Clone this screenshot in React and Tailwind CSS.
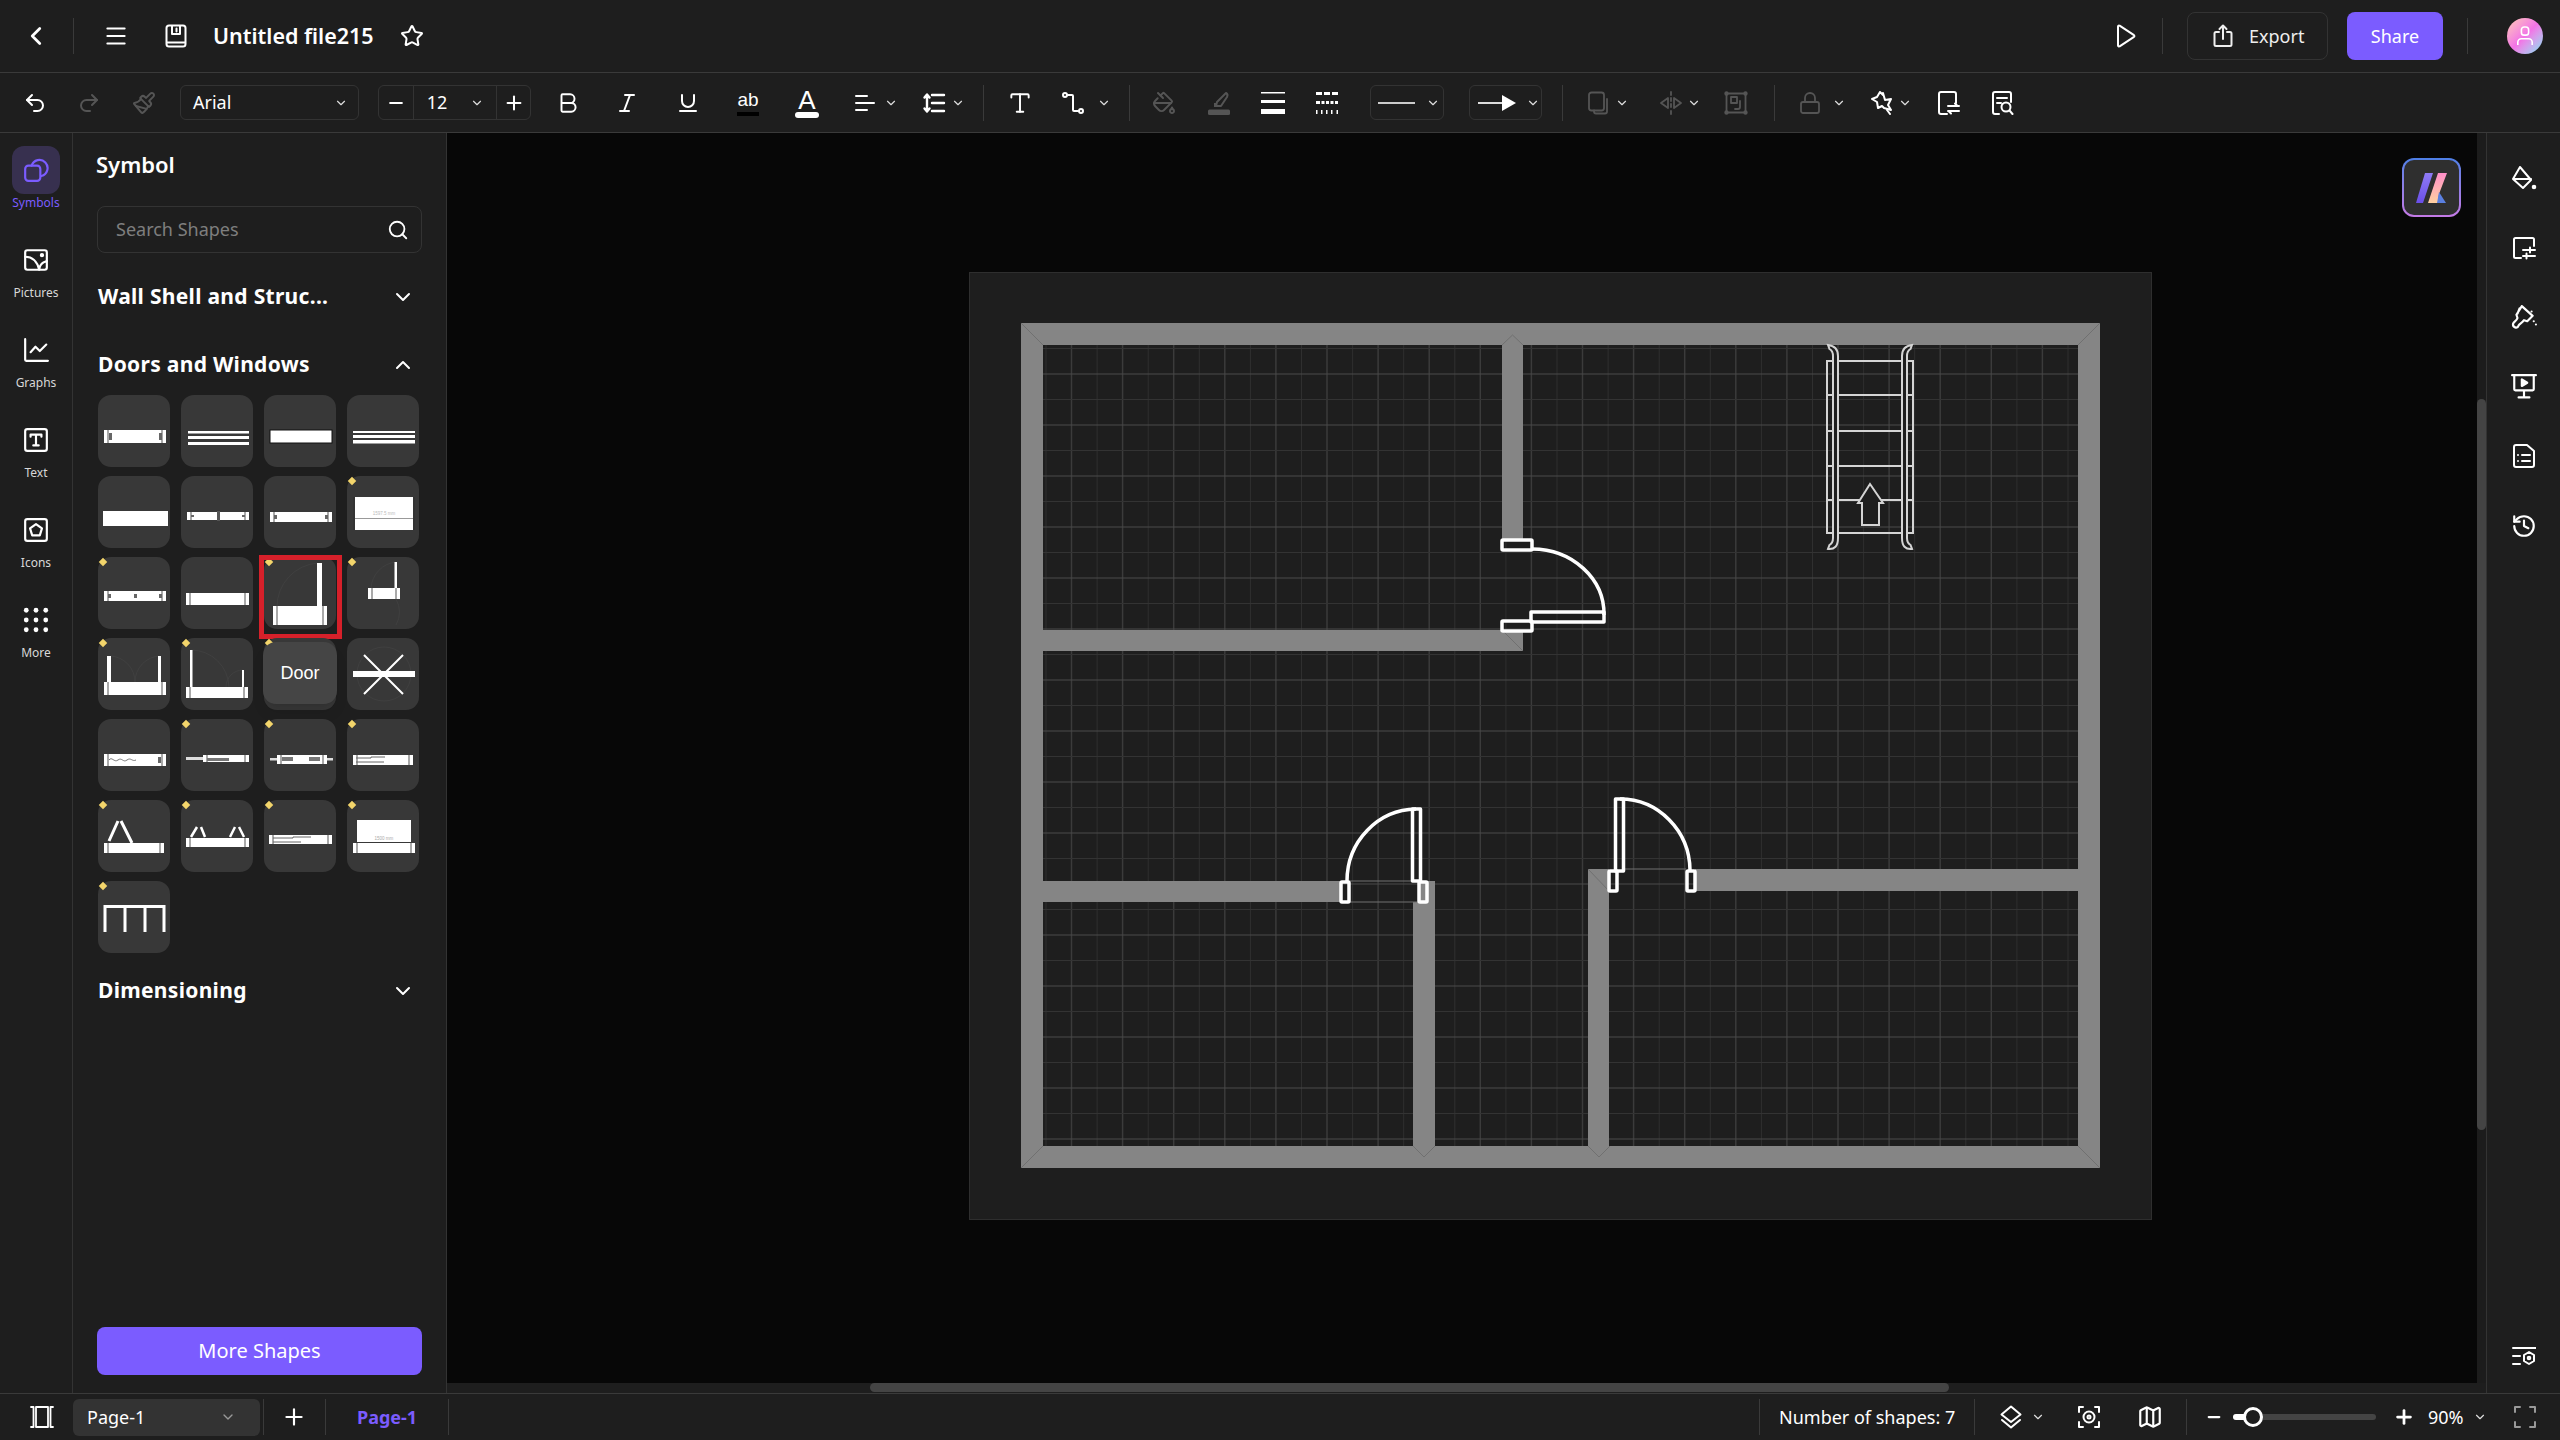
import React from 'react';
import {
  ChevronLeft, ChevronDown, ChevronUp, Menu, Star, Undo2, Redo2, Paintbrush, Bold, Italic, Underline,
  Type, PaintBucket, Lock, Plus, Minus, Search, Map, History,
} from 'lucide-react';

const Ic = ({ children, className = '', sw = 2, size = 24 }) => (
  <svg viewBox="0 0 24 24" width={size} height={size} fill="none" stroke="currentColor" strokeWidth={sw} strokeLinecap="round" strokeLinejoin="round" className={`shrink-0 ${className}`}>
    {children}
  </svg>
);

const Chev = ({ className = '' }) => <ChevronDown size={14} strokeWidth={2} className={`shrink-0 text-[#ddd] ${className}`} />;
const Divider = ({ className = '' }) => <div className={`w-px h-[36px] shrink-0 bg-[#3a3a3a] ${className}`} />;

// toolbar + rail icons
const SaveIcon = ({ className }) => (
  <Ic className={className}><rect x="2.5" y="1.5" width="19" height="21" rx="2.5" /><path d="M8 2v8h8V2M12.5 4.5v3M3 18.5h18" /></Ic>
);
const AlignIcon = ({ className }) => <Ic className={className}><path d="M3 5h11M3 12h18M3 19h11" /></Ic>;
const SpacingIcon = ({ className }) => (
  <Ic className={className} sw={2.4}><path d="M10 4h12M10 12h12M10 20h12" /><path d="M5 4v16M2.5 6.5 5 3.5l2.5 3M2.5 17.5l2.5 3 2.5-3" /></Ic>
);
const ConnectorIcon = ({ className }) => (
  <Ic className={className}><circle cx="4" cy="4" r="2" /><circle cx="20" cy="20" r="2" /><path d="M6 4h5a1 1 0 0 1 1 1v14a1 1 0 0 0 1 1h5" /></Ic>
);
const PenBarIcon = ({ className }) => (
  <svg viewBox="0 0 24 24" width="24" height="24" fill="none" className={`shrink-0 ${className}`}>
    <path d="M19 2c2 1 2 2 1 4l-6 9H9l1-4Z" stroke="currentColor" strokeWidth="2" strokeLinejoin="round" />
    <path d="M8 12v4" stroke="currentColor" strokeWidth="2" />
    <rect x="1" y="18.5" width="22" height="5.5" rx="1.5" fill="currentColor" />
  </svg>
);
const WeightIcon = ({ className }) => (
  <svg viewBox="0 0 24 24" width="24" height="24" className={`shrink-0 ${className}`} fill="currentColor">
    <rect y="1" width="24" height="1.5" /><rect y="9" width="24" height="3" /><rect y="18" width="24" height="5" />
  </svg>
);
const DashIcon = ({ className }) => (
  <svg viewBox="0 0 24 24" width="24" height="24" className={`shrink-0 ${className}`} fill="currentColor">
    <path d="M1 1h6v3H1zM9 1h6v3H9zM17 1h6v3h-6z" />
    <path d="M1 10h4v3H1zM6.500 10h3v3h-3zM11 10h3v3h-3zM15.500 10h3v3h-3zM20 10h3v3h-3z" />
    <path d="M1 19h1.500v4H1zM6 19h1.500v4H6zM11 19h1.500v4H11zM16 19h1.500v4H16zM21.500 19H23v4h-1.500z" />
  </svg>
);
const CopyIcon = ({ className }) => <Ic className={className} sw={1.8}><rect x="2" y="1.500" width="15" height="18" rx="2.500" /><path d="M7 19.500v1a2 2 0 0 0 2 2h9a2 2 0 0 0 2-2V8" /></Ic>;
const FlipIcon = ({ className }) => <Ic className={className} sw={1.8}><path d="M12 1v3M12 7v3M12 13v3M12 20v3M9 7v10l-7-5ZM15 7v10l7-5Z" /></Ic>;
const GroupIcon = ({ className }) => (
  <Ic className={className} sw={1.8}><rect x="2.500" y="2.500" width="19" height="19" /><circle cx="2.500" cy="2.500" r="1.300" /><circle cx="21.500" cy="2.500" r="1.300" /><circle cx="2.500" cy="21.500" r="1.300" /><circle cx="21.500" cy="21.500" r="1.300" /><rect x="7" y="6" width="6" height="6" /><path d="M16 10v6a2 2 0 0 1-2 2h-3" /></Ic>
);
const MagicIcon = ({ className }) => (
  <Ic className={className}><path d="M13 2 15 9l6-1-3 6 3 5-7-2-2-2-4 2-1-6-5-3 5-2 3-5 3 3" /><path d="m17 19 3 4" /></Ic>
);
const ReplaceIcon = ({ className }) => (
  <Ic className={className}><path d="M11 23H5a2 2 0 0 1-2-2V3a2 2 0 0 1 2-2h13a2 2 0 0 1 2 2v9" /><path d="M12 15h11M19 12.500l2.500 2.500M23 20H12M15 22.500 12.500 20" /></Ic>
);
const DocSearchIcon = ({ className }) => (
  <Ic className={className}><path d="M9 23H5a2 2 0 0 1-2-2V3a2 2 0 0 1 2-2h14a2 2 0 0 1 2 2v8" /><path d="M7 7h10M7 12h4" /><circle cx="16" cy="16" r="4.500" /><path d="m19.500 19.500 3 3.500" /></Ic>
);
const PlayIcon = ({ className }) => <Ic className={className}><path d="M5 2.500v19a1 1 0 0 0 1.600.8L21 12.800a1 1 0 0 0 0-1.600L6.600 1.700A1 1 0 0 0 5 2.500Z" /></Ic>;
const ExportIcon = ({ className }) => <Ic className={className}><path d="M8 8H5a1.500 1.500 0 0 0-1.500 1.500v11A1.500 1.500 0 0 0 5 22h14a1.500 1.500 0 0 0 1.500-1.500v-11A1.500 1.500 0 0 0 19 8h-3M12 15V2M8.500 5 12 1.500 15.500 5" /></Ic>;

const SymbolsIcon = ({ className }) => (
  <Ic className={className} size={26}><rect x="2" y="8" width="14" height="14" rx="3" /><path d="M8 8a7.500 7.500 0 1 1 9 9.500" /></Ic>
);
const PicturesIcon = ({ className }) => (
  <Ic className={className} size={26}><rect x="2" y="3" width="20" height="18" rx="2" /><path d="M2 9c6 0 11 4 13 12M15 21c0-4 3-7 7-8" /><circle cx="17.500" cy="7.500" r="1" fill="currentColor" /></Ic>
);
const GraphsIcon = ({ className }) => <Ic className={className} size={26}><path d="M2 2v19a1 1 0 0 0 1 1h20M7 14l4.500-5 4 4 6-6" /></Ic>;
const TextBoxIcon = ({ className }) => (
  <Ic className={className} size={26}><rect x="2" y="2" width="20" height="20" rx="2" /><path d="M7 9V7h10v2M12 7v10M9.500 17h5" /></Ic>
);
const IconsBoxIcon = ({ className }) => (
  <Ic className={className} size={26}><rect x="2" y="2" width="20" height="20" rx="2" /><path d="m12 6.500 5.500 4-2 6.500h-7l-2-6.500Z" /></Ic>
);
const DotsIcon = ({ className }) => (
  <svg viewBox="0 0 24 24" width="26" height="26" fill="currentColor" className={`shrink-0 ${className}`}>
    {[3, 12, 21].map((y) => [3, 12, 21].map((x) => <circle key={`${x}-${y}`} cx={x} cy={y} r="2.200" />))}
  </svg>
);

// right rail
const FillIcon = ({ className }) => (
  <svg viewBox="0 0 26 26" width="26" height="26" fill="none" stroke="currentColor" strokeWidth="2" strokeLinejoin="round" strokeLinecap="round" className={`shrink-0 ${className}`}>
    <path d="M9 1l11 13-8 8-10-9Z" />
    <path d="M3 13h17" />
    <circle cx="23" cy="21" r="1.300" fill="currentColor" />
  </svg>
);
const MonitorSliderIcon = ({ className }) => (
  <Ic className={className}><path d="M9 22H3.500A1.500 1.500 0 0 1 2 20.500v-17A1.500 1.500 0 0 1 3.500 2h17A1.500 1.500 0 0 1 22 3.500V10" /><path d="M11 14h12M11 20h12M18 11.500v5M14.500 17.500v5" /></Ic>
);
const BrushSparkIcon = ({ className }) => (
  <Ic className={className} size={26}><path d="m10 1 10 9-5 5-3-1c-2 3-4 3-5 5-1 3-6 2-5-2 1-2 3-2 4-5l-1-3ZM8 3 6 8" /><path d="M21 15v.01M23 18v.01M19 6v.01" /></Ic>
);
const PresentIcon = ({ className }) => (
  <Ic className={className} size={26}><path d="M1 2h22M3 2v13a1 1 0 0 0 1 1h16a1 1 0 0 0 1-1V2M12 16v6M7 22.500h10" /><path d="M10 6v6l5-3Z" fill="currentColor" /></Ic>
);
const DocListIcon = ({ className }) => (
  <Ic className={className}><path d="M15 1H4a2 2 0 0 0-2 2v18a2 2 0 0 0 2 2h16a2 2 0 0 0 2-2V7Z" /><path d="M10 11h8M10 17h8M6 11v.01M6 17v.01" /></Ic>
);
const SettingsListIcon = ({ className }) => (
  <Ic className={className}><path d="M1 2h23M1 10h7M1 18h7" /><path d="m17 6 5 3v6l-5 3-5-3V9Z" /><circle cx="17" cy="12" r="1.300" /></Ic>
);

// bottom bar
const PanelIcon = ({ className }) => (
  <Ic className={className} sw={1.8}><rect x="6" y="2" width="12" height="20" /><path d="M1 2h2.500v20H1M23 2h-2.500v20H23" /></Ic>
);
const LayersIcon = ({ className }) => <Ic className={className}><path d="m12 1.500 9.500 8L12 17 2.500 9.500Z" /><path d="m3 15 9 7.500 9-7.500" /></Ic>;
const FocusIcon = ({ className }) => (
  <Ic className={className}><path d="M6 2H2v5M18 2h4v5M6 22H2v-5M18 22h4v-5" /><circle cx="12" cy="12" r="5.500" /><circle cx="12" cy="12" r="1.500" /></Ic>
);
const FullIcon = ({ className }) => <Ic className={className}><path d="M7 2H2v5M17 2h5v5M7 22H2v-5M17 22h5v-5" /></Ic>;

const AiLogo = () => (
  <svg viewBox="0 0 36 36" width="36" height="36">
    <defs>
      <linearGradient id="aiA" x1="0" y1="0" x2="0" y2="1"><stop offset="0" stopColor="#8f7bf5" /><stop offset="1" stopColor="#6a4fe8" /></linearGradient>
      <linearGradient id="aiB" x1="0" y1="0" x2="0" y2="1"><stop offset="0" stopColor="#ff8ec8" /><stop offset="1" stopColor="#ffd0a0" /></linearGradient>
    </defs>
    <path d="M11 3h8L9 33H2Z" fill="url(#aiA)" />
    <path d="M24 3h9l-8 21-1 9h-10Z" fill="url(#aiB)" />
    <path d="m25 22 7 11h-9Z" fill="#5a7fe0" />
  </svg>
);

// symbol tile drawings, 72x72 units
const W = 'white';
const Caps = ({ x1, x2, y1, y2 }) => (
  <>
    <rect x={x1} y={y1} width={x2 - x1} height={y2 - y1} fill={W} />
    <rect x={x1 + 3.500} y={y1} width="1" height={y2 - y1} fill="#555" />
    <rect x={x2 - 4.500} y={y1} width="1" height={y2 - y1} fill="#555" />
  </>
);
const Win = ({ y1, y2, marks = [] }) => (
  <>
    <Caps x1={6} x2={68} y1={y1} y2={y2} />
    {marks.map((m) => <rect key={m} x={m} y={y1 + 3} width="3" height={y2 - y1 - 6} fill="#666" />)}
  </>
);
const Arc = ({ d }) => <path d={d} fill="none" stroke="#444" strokeWidth="0.600" />;

const tiles = [
  { art: <Win y1={35} y2={48} marks={[11, 61]} /> },
  { art: <><rect x="7" y="36" width="61" height="2.500" fill={W} /><rect x="7" y="41" width="61" height="3" fill={W} /><rect x="7" y="47" width="61" height="3" fill={W} /></> },
  { art: <rect x="6" y="35" width="62" height="13" fill={W} stroke="#111" strokeWidth="1" /> },
  { art: <><rect x="6" y="36" width="62" height="2" fill={W} /><rect x="6" y="40" width="62" height="3" fill={W} /><rect x="6" y="45" width="62" height="3.500" fill={W} /></> },
  { art: <rect x="5" y="35" width="65" height="15" fill={W} /> },
  { art: <><Win y1={36} y2={44} marks={[10, 61]} /><rect x="36" y="35" width="3" height="10" fill="#555" /></> },
  { art: <Win y1={36} y2={46} marks={[10, 61]} /> },
  { premium: true, art: <><rect x="6" y="21" width="62" height="33" fill={W} /><rect x="6" y="21" width="2" height="33" fill="#333" /><rect x="66" y="21" width="2" height="33" fill="#333" /><rect x="8" y="42" width="58" height="1" fill="#999" /><text x="37" y="39" fontSize="4.500" fill="#bbb" textAnchor="middle" fontFamily="Liberation Sans">1597.5 mm</text></> },
  { premium: true, art: <><Win y1={34} y2={44} marks={[10, 36, 61]} /></> },
  { art: <Caps x1={5} x2={68} y1={36} y2={48} /> },
  { premium: true, door: true, art: <><Arc d="M54 6A44 44 0 0 0 13 50" /><rect x="53" y="6" width="5" height="43" fill={W} /><Caps x1={9} x2={63} y1={49} y2={68} /></> },
  { premium: true, art: <><Arc d="M49 5A28 28 0 0 0 24 31M49 42A26 26 0 0 1 49 68" /><rect x="47.500" y="5" width="2.500" height="26" fill={W} /><Caps x1={21} x2={53} y1={31} y2={42} /></> },
  { premium: true, art: <><Arc d="M12 18A26 26 0 0 1 37 44M62 18A26 26 0 0 0 37 44" /><rect x="9" y="18" width="4" height="26" fill={W} /><rect x="60" y="18" width="3" height="26" fill={W} /><Caps x1={6} x2={68} y1={44} y2={57} /></> },
  { premium: true, art: <><Arc d="M10 12A38 38 0 0 1 48 49M62 32A17 17 0 0 0 45 49" /><rect x="9" y="12" width="2.500" height="37" fill={W} /><rect x="61" y="32" width="2" height="17" fill={W} /><Caps x1={5} x2={67} y1={49} y2={60} /></> },
  { premium: true, tip: 'Door', art: null },
  { art: <><circle cx="37" cy="36" r="27" fill="none" stroke="#444" strokeWidth="0.600" /><rect x="6" y="33" width="62" height="6" fill={W} /><path d="M17 17 56 56M56 17 17 56" stroke={W} strokeWidth="2" /></> },
  { art: <><Win y1={35} y2={47} marks={[60]} /><path d="M11 41c3-4 5 3 9 0s5 3 9 0 5 2 9 0" stroke="#777" strokeWidth="1" fill="none" /></> },
  { premium: true, art: <><rect x="5" y="38" width="17" height="3" fill="#ddd" /><Caps x1={22} x2={68} y1={36} y2={43} /><rect x="26" y="39" width="22" height="3" fill="#777" /></> },
  { premium: true, art: <><rect x="6" y="39" width="63" height="2.500" fill="#ddd" /><Caps x1={13} x2={63} y1={36} y2={45} /><rect x="18" y="38" width="11" height="4" fill="#777" /><rect x="45" y="38" width="11" height="4" fill="#777" /></> },
  { premium: true, art: <><Caps x1={6} x2={66} y1={36} y2={46} /><path d="M9 39h15v-1h14M9 43h28" stroke="#666" strokeWidth="1" fill="none" /></> },
  { premium: true, art: <><path d="M11 41 20 21M23 21 34 43" stroke={W} strokeWidth="3" /><Caps x1={6} x2={66} y1={43} y2={53} /></> },
  { premium: true, art: <><path d="M10 37 16 27M20 27 24 37M49 37 54 27M58 27 63 37" stroke={W} strokeWidth="2.500" /><Caps x1={5} x2={68} y1={38} y2={47} /></> },
  { premium: true, art: <><Caps x1={5} x2={68} y1={35} y2={44} /><path d="M9 38h20v-1h18M9 42h28" stroke="#666" strokeWidth="1" fill="none" /></> },
  { premium: true, art: <><rect x="10" y="20" width="54" height="22" fill={W} /><text x="37" y="40" fontSize="4.500" fill="#aaa" textAnchor="middle" fontFamily="Liberation Sans">1500 mm</text><Caps x1={6} x2={68} y1={43} y2={53} /></> },
  { premium: true, art: <path d="M7 51V25.500H66V51M27 25.500V51M47 25.500V51" fill="none" stroke={W} strokeWidth="3" /> },
];

const Tile = ({ tile }) => (
  <div className="relative w-[72px] h-[72px] rounded-[13px] bg-[#383838]">
    <svg viewBox="0 0 72 72" width="72" height="72" className="block">{tile.art}</svg>
    {tile.premium && <div className="absolute left-[2px] top-[2px] w-[6px] h-[6px] rotate-45 bg-[#f3d56b]" />}
    {tile.door && <div className="absolute left-[-5px] right-[-6px] top-[-2px] bottom-[-10px] border-[5px] border-[#d6202a]" />}
    {tile.tip && (
      <div className="absolute left-[-1px] top-[4px] w-[74px] h-[62px] rounded-[13px] bg-[#454545] shadow-lg flex items-center justify-center text-[18px] text-white font-['Liberation_Sans',sans-serif]">
        {tile.tip}
      </div>
    )}
  </div>
);

const RailItem = ({ icon: Icon, label, active }) => (
  <div className="h-[90px] w-full flex flex-col items-center">
    <div className={`w-[48px] h-[48px] rounded-xl flex items-center justify-center ${active ? 'bg-[#37304f] text-[#7b5cff]' : 'text-white'}`}>
      <Icon />
    </div>
    <div className={`mt-[1px] h-[16px] text-[12px] leading-[16px] ${active ? 'text-[#7b5cff]' : 'text-[#d8d8d8]'}`}>{label}</div>
  </div>
);

const SectionTitle = ({ children, open, className = '' }) => (
  <div className={`w-[317px] h-[30px] flex items-center justify-between ${className}`}>
    <span className="text-[21px] font-bold tracking-[0.3px] whitespace-nowrap">{children}</span>
    {open ? <ChevronUp size={24} strokeWidth={2} /> : <ChevronDown size={24} strokeWidth={2} />}
  </div>
);

// floor plan, coordinates are page pixels so the numbers line up with the picture
const range = (from, to, step) => {
  const out = [];
  for (let v = from; v <= to; v += step) out.push(v);
  return out;
};
const WALL = '#858585';

const DoorStroke = ({ children }) => (
  <g fill="none" stroke="white" strokeWidth="3.500" strokeLinejoin="round">{children}</g>
);

const FloorPlan = () => (
  <svg viewBox="969 272 1183 948" width="1183" height="948" className="block">
    <rect x="969.500" y="272.500" width="1182" height="947" fill="#1e1e1e" stroke="#2e2e2e" />
    {/* grid */}
    <g>
      {range(1046, 2078, 51.1).map((x) => <line key={`v${x}`} x1={x} x2={x} y1="345" y2="1146" stroke="#2f2f2f" strokeWidth="1" />)}
      {range(1071.500, 2078, 51.1).map((x) => <line key={`V${x}`} x1={x} x2={x} y1="345" y2="1146" stroke="#3b3b3b" strokeWidth="1.500" />)}
      {range(348.500, 1146, 51).map((y) => <line key={`h${y}`} x1="1043" x2="2078" y1={y} y2={y} stroke="#333" strokeWidth="1" />)}
      {range(374, 1146, 51).map((y) => <line key={`H${y}`} x1="1043" x2="2078" y1={y} y2={y} stroke="#4a4a4a" strokeWidth="1" />)}
    </g>
    {/* walls */}
    <g fill={WALL}>
      <rect x="1021" y="323" width="1079" height="22" />
      <rect x="1021" y="1146" width="1079" height="22" />
      <rect x="1021" y="323" width="22" height="845" />
      <rect x="2078" y="323" width="22" height="845" />
      <rect x="1502" y="345" width="21" height="194" />
      <rect x="1043" y="630" width="480" height="21" />
      <rect x="1043" y="881" width="297" height="21" />
      <rect x="1420" y="881" width="15" height="21" />
      <rect x="1413" y="902" width="22" height="244" />
      <rect x="1588" y="869" width="21" height="277" />
      <rect x="1695" y="869" width="383" height="22" />
    </g>
    <g stroke="#707070" strokeWidth="1" fill="none">
      <path d="M1021 323l22 22M2100 323l-22 22M1021 1168l22-22M2100 1168l-22-22M1502 345l10.500-10 10.500 10M1502 630l21 21M1588 869l21 22M1413 1146l11 11 11-11M1588 1146l11 11 11-11" />
      <path d="M1349 881h69M1349 902h69M1624 869h62" />
    </g>
    {/* door, right of the top room */}
    <DoorStroke>
      <rect x="1502" y="540" width="30" height="10" rx="1" />
      <rect x="1502" y="621" width="30" height="10" rx="1" />
      <rect x="1531" y="612" width="73" height="10" />
      <path d="M1532 549A72 65 0 0 1 1604 615" />
    </DoorStroke>
    {/* door, bottom left room */}
    <DoorStroke>
      <rect x="1341" y="882" width="8" height="20" rx="1" />
      <rect x="1419" y="882" width="8" height="20" rx="1" />
      <rect x="1412.500" y="809" width="8" height="72" />
      <path d="M1347 881A70 72 0 0 1 1416 809" />
    </DoorStroke>
    {/* door, bottom right room */}
    <DoorStroke>
      <rect x="1609" y="871" width="8" height="20" rx="1" />
      <rect x="1687" y="871" width="8" height="20" rx="1" />
      <rect x="1615.500" y="799" width="8" height="72" />
      <path d="M1620 799A70 72 0 0 1 1690 870" />
    </DoorStroke>
    {/* stairs */}
    <g fill="none" stroke="#d4d4d4" strokeWidth="2">
      <rect x="1827" y="361" width="86" height="172" />
      <path d="M1827 395h86M1827 431h86M1827 466h86M1827 500h86" />
      <path d="M1828 345l1.500 4Q1833 351 1833 356V538Q1833 543 1829.500 545L1828 549Q1838 550 1838 538V356Q1838 346 1828 345Z" fill="#1e1e1e" />
      <path d="M1912 345l-1.500 4Q1907 351 1907 356V538Q1907 543 1910.500 545L1912 549Q1902 550 1902 538V356Q1902 346 1912 345Z" fill="#1e1e1e" />
      <path d="M1870 484 1858 503h4v22h17v-22h4Z" fill="#1e1e1e" />
    </g>
  </svg>
);

const TopBar = () => (
  <header className="h-[73px] shrink-0 flex items-center pl-[24px] border-b border-[#3a3a3a]">
    <ChevronLeft size={30} strokeWidth={2.200} className="-ml-[3px] shrink-0" />
    <Divider className="ml-[22px]" />
    <Menu size={26} strokeWidth={1.800} className="ml-[29px] shrink-0" />
    <SaveIcon className="ml-[35px]" />
    <div className="ml-[25px] w-[162px] text-[21.5px] font-semibold whitespace-nowrap">Untitled file215</div>
    <Star size={24} strokeWidth={2} className="ml-[25px] shrink-0" />
    <PlayIcon className="ml-auto" />
    <Divider className="ml-[25px]" />
    <button className="ml-[24px] w-[141px] h-[48px] rounded-lg border border-[#333] flex items-center pl-[23px] gap-[14px] text-[18px] text-[#eee]">
      <ExportIcon />
      <span>Export</span>
    </button>
    <button className="ml-[19px] w-[96px] h-[48px] rounded-lg bg-[#7b5cff] text-[18px] text-white">Share</button>
    <Divider className="ml-[24px]" />
    <div className="ml-[39px] mr-[17px] w-[36px] h-[36px] rounded-full shrink-0 bg-linear-to-br from-[#ffc9b0] via-[#f272e6] to-[#5ce3f5] flex items-center justify-center">
      <svg viewBox="0 0 20 24" width="18" height="22" fill="none" stroke="white" strokeWidth="1.800"><rect x="6" y="2" width="8" height="9" rx="3" /><path d="M2 22v-3a4 4 0 0 1 4-4h8a4 4 0 0 1 4 4v3" /></svg>
    </div>
  </header>
);

const ToolBar = () => (
  <div className="h-[60px] shrink-0 flex items-center pl-[23px] border-b border-[#3a3a3a] text-white">
    <Undo2 size={24} strokeWidth={2} className="shrink-0" />
    <Redo2 size={24} strokeWidth={2} className="ml-[30px] shrink-0 text-[#555]" />
    <Paintbrush size={24} strokeWidth={2} className="ml-[31px] shrink-0 text-[#555]" />
    <div className="ml-[24px] w-[179px] h-[35px] shrink-0 rounded-md border border-[#333] flex items-center justify-between pl-[12px] pr-[10px] text-[18px] font-['Noto_Sans',sans-serif]">
      <span>Arial</span>
      <Chev />
    </div>
    <div className="ml-[19px] w-[153px] h-[35px] shrink-0 flex items-center rounded-md border border-[#333]">
      <div className="w-[34px] flex justify-center"><Minus size={20} strokeWidth={2.500} /></div>
      <div className="w-[85px] h-[35px] border border-[#333] flex items-center justify-between pl-[13px] pr-[12px] text-[18px]">
        <span>12</span>
        <Chev />
      </div>
      <div className="w-[33px] flex justify-center"><Plus size={22} strokeWidth={2.200} /></div>
    </div>
    <Bold size={26} strokeWidth={1.800} className="ml-[24px] shrink-0" />
    <Italic size={24} strokeWidth={2} className="ml-[34px] shrink-0" />
    <Underline size={24} strokeWidth={2} className="ml-[37px] shrink-0" />
    <div className="ml-[36px] w-[24px] shrink-0 flex flex-col items-center text-[19px] leading-[20px] font-['Liberation_Sans',sans-serif]">
      <span>ab</span>
      <div className="w-[22px] h-[4px] bg-black mt-[2px]" />
    </div>
    <div className="ml-[35px] w-[24px] shrink-0 flex flex-col items-center text-[26px] leading-[24px] font-['Liberation_Sans',sans-serif]">
      <span>A</span>
      <div className="w-[24px] h-[6px] rounded-[3px] bg-white" />
    </div>
    <AlignIcon className="ml-[34px]" />
    <Chev className="ml-[7px]" />
    <SpacingIcon className="ml-[24px]" />
    <Chev className="ml-[5px]" />
    <Divider className="ml-[18px]" />
    <Type size={26} strokeWidth={1.800} className="ml-[23px] shrink-0" />
    <ConnectorIcon className="ml-[28px]" />
    <Chev className="ml-[12px]" />
    <Divider className="ml-[18px]" />
    <PaintBucket size={24} strokeWidth={2} className="ml-[22px] shrink-0 text-[#555]" />
    <PenBarIcon className="ml-[31px] text-[#555]" />
    <WeightIcon className="ml-[30px]" />
    <DashIcon className="ml-[30px]" />
    <div className="ml-[31px] w-[74px] h-[35px] shrink-0 rounded-md border border-[#333] flex items-center pl-[7px] gap-[11px]">
      <div className="w-[37px] h-[2px] bg-[#ccc]" />
      <Chev />
    </div>
    <div className="ml-[25px] w-[73px] h-[35px] shrink-0 rounded-md border border-[#333] flex items-center pl-[8px] gap-[10px]">
      <svg viewBox="0 0 38 16" width="38" height="16"><rect y="7" width="26" height="2" fill="#ddd" /><path d="M24 0 38 8 24 16Z" fill="white" /></svg>
      <Chev />
    </div>
    <Divider className="ml-[20px]" />
    <CopyIcon className="ml-[24px] text-[#555]" />
    <Chev className="ml-[4px] text-[#555]" />
    <FlipIcon className="ml-[30px] text-[#555]" />
    <Chev className="ml-[4px] text-[#555]" />
    <GroupIcon className="ml-[23px] text-[#555]" />
    <Divider className="ml-[26px]" />
    <Lock size={24} strokeWidth={1.800} className="ml-[23px] shrink-0 text-[#555]" />
    <Chev className="ml-[10px] text-[#555]" />
    <MagicIcon className="ml-[24px]" />
    <Chev className="ml-[4px]" />
    <ReplaceIcon className="ml-[24px]" />
    <DocSearchIcon className="ml-[30px]" />
  </div>
);

const SymbolPanel = () => (
  <aside className="w-[374px] shrink-0 flex flex-col pl-[25px] border-r border-[#333]">
    <div className="mt-[16px] h-[30px] -ml-[2px] flex items-center text-[22px] font-semibold">Symbol</div>
    <div className="mt-[27px] -ml-[1px] w-[325px] h-[47px] rounded-lg border border-[#333] flex items-center justify-between pl-[18px] pr-[12px]">
      <span className="text-[18px] text-[#7e7e7e]">Search Shapes</span>
      <Search size={22} strokeWidth={2} />
    </div>
    <SectionTitle className="mt-[29px]">Wall Shell and Struc...</SectionTitle>
    <SectionTitle open className="mt-[38px]">Doors and Windows</SectionTitle>
    <div className="mt-[15px] grid grid-cols-[repeat(4,72px)] gap-x-[11px] gap-y-[9px]">
      {tiles.map((tile, i) => <Tile key={i} tile={tile} />)}
    </div>
    <SectionTitle className="mt-[23px]">Dimensioning</SectionTitle>
    <button className="mt-auto mb-[18px] -ml-[1px] w-[325px] h-[48px] shrink-0 rounded-lg bg-[#7b5cff] text-[20px] text-white">More Shapes</button>
  </aside>
);

const Canvas = () => (
  <div className="flex-1 min-w-0 flex flex-col">
    <div className="flex-1 min-h-0 flex">
      <div className="relative w-[2030px] shrink-0 bg-[#070707] pl-[522px] pt-[139px]">
        <div className="w-[1183px] h-[948px]">
          <FloorPlan />
        </div>
        <div className="absolute left-[1955px] top-[25px] w-[59px] h-[59px] rounded-[12px] p-[2px] bg-linear-to-b from-[#4d7fe6] to-[#c47ae6]">
          <div className="w-full h-full rounded-[10px] bg-[#2f2f2f] flex items-center justify-center"><AiLogo /></div>
        </div>
      </div>
      <div className="flex-1 flex flex-col bg-[#1c1c1c]">
        <div className="h-[266px] shrink-0" />
        <div className="h-[731px] rounded-full bg-[#444]" />
      </div>
    </div>
    <div className="h-[10px] shrink-0 flex bg-[#1e1e1e]">
      <div className="w-[423px] shrink-0" />
      <div className="w-[1079px] h-[9px] rounded-full bg-[#444]" />
    </div>
  </div>
);

const RightRail = () => (
  <aside className="w-[74px] shrink-0 flex flex-col items-center border-l border-[#333] pt-[33px] text-white">
    <FillIcon />
    <MonitorSliderIcon className="mt-[44px]" />
    <BrushSparkIcon className="mt-[45px]" />
    <PresentIcon className="mt-[42px]" />
    <DocListIcon className="mt-[45px]" />
    <History size={26} strokeWidth={2} className="mt-[45px] shrink-0" />
    <SettingsListIcon className="mt-auto mb-[23px]" />
  </aside>
);

const BottomBar = () => (
  <footer className="h-[47px] shrink-0 flex items-center pl-[30px] pr-[23px] border-t border-[#3a3a3a]">
    <PanelIcon />
    <div className="ml-[19px] w-[187px] h-[37px] shrink-0 rounded-md bg-[#333] flex items-center justify-between pl-[14px] pr-[24px] text-[18px]">
      <span>Page-1</span>
      <ChevronDown size={16} strokeWidth={2} className="text-[#999]" />
    </div>
    <Divider className="ml-[3px]" />
    <Plus size={26} strokeWidth={2} className="ml-[17px] shrink-0" />
    <Divider className="ml-[18px]" />
    <div className="ml-[31px] w-[60px] text-[18px] font-bold text-[#7b5cff] whitespace-nowrap">Page-1</div>
    <Divider className="ml-[31px]" />
    <Divider className="ml-auto" />
    <div className="ml-[19px] w-[176px] text-[18px] whitespace-nowrap">Number of shapes: 7</div>
    <Divider className="ml-[19px]" />
    <LayersIcon className="ml-[24px]" />
    <Chev className="ml-[8px]" />
    <FocusIcon className="ml-[32px]" />
    <Map size={26} strokeWidth={2} className="ml-[36px] shrink-0" />
    <Divider className="ml-[23px]" />
    <Minus size={18} strokeWidth={3} className="ml-[18px] shrink-0" />
    <div className="relative ml-[10px] w-[143px] h-[6px] rounded-full bg-[#444]">
      <div className="absolute left-0 top-0 w-[12px] h-[6px] bg-white rounded-l-full" />
      <div className="absolute left-[10px] top-[-7px] w-[20px] h-[20px] rounded-full border-[3.5px] border-white bg-[#1e1e1e]" />
    </div>
    <Plus size={22} strokeWidth={3} className="ml-[17px] shrink-0" />
    <div className="ml-[13px] w-[38px] text-[18px] whitespace-nowrap">90%</div>
    <Chev className="ml-[7px]" />
    <FullIcon className="ml-[26px] text-[#999]" />
  </footer>
);

export default function App() {
  return (
    <div className="w-[2560px] h-[1440px] flex flex-col overflow-hidden bg-[#1e1e1e] text-white font-['Noto_Sans',sans-serif]">
      <TopBar />
      <ToolBar />
      <main className="flex-1 min-h-0 flex">
        <nav className="w-[73px] shrink-0 flex flex-col pt-[13px] border-r border-[#333]">
          <RailItem icon={SymbolsIcon} label="Symbols" active />
          <RailItem icon={PicturesIcon} label="Pictures" />
          <RailItem icon={GraphsIcon} label="Graphs" />
          <RailItem icon={TextBoxIcon} label="Text" />
          <RailItem icon={IconsBoxIcon} label="Icons" />
          <RailItem icon={DotsIcon} label="More" />
        </nav>
        <SymbolPanel />
        <Canvas />
        <RightRail />
      </main>
      <BottomBar />
    </div>
  );
}
